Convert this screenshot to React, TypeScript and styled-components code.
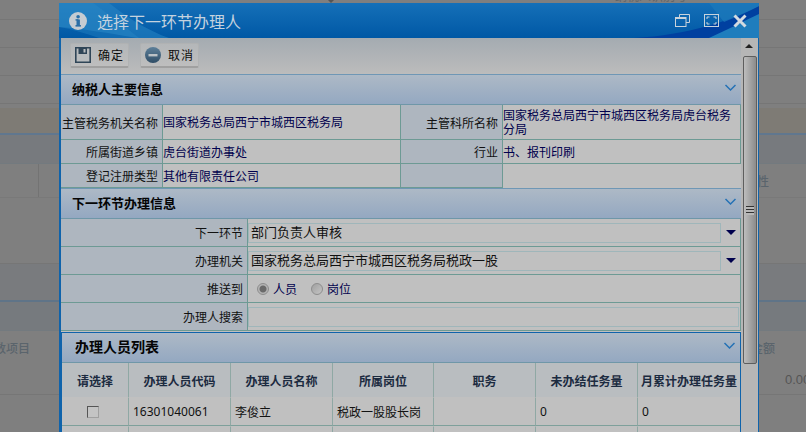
import React from 'react'
import styled, { createGlobalStyle } from 'styled-components'

const GlobalStyle = createGlobalStyle`
  html, body {
    margin: 0;
    padding: 0;
    background: #7f7f7f;
  }
  * {
    box-sizing: border-box;
  }
`

const Page = styled.div`
  position: relative;
  width: 806px;
  height: 432px;
  overflow: hidden;
  background: #7f7f7f;
  font-family: 'Noto Sans CJK SC', 'Liberation Sans', sans-serif;
  font-size: 12px;
`

const BackRow = styled.div<{ $h: number; $bg?: string; $line?: string }>`
  display: flex;
  justify-content: space-between;
  align-items: center;
  height: ${(p) => p.$h}px;
  background: ${(p) => p.$bg || 'transparent'};
  border-bottom: ${(p) => (p.$line ? `1px solid ${p.$line}` : 'none')};
  color: #5a646c;
  font-size: 12px;
  font-weight: 500;
  white-space: nowrap;
`

const TopStrip = styled.div`
  display: flex;
  height: 3px;
  overflow: hidden;
  color: #5f6468;
  font-size: 12px;
  line-height: 12px;
`

const StripArrow = styled.div`
  width: 0;
  height: 0;
  margin-left: 328px;
  border-top: 3px solid #555;
  border-left: 3px solid transparent;
  border-right: 3px solid transparent;
`

const StripText = styled.div`
  margin: -10px 0 0 281px;
  white-space: nowrap;
`

const BackLeft = styled.div`
  display: flex;
  justify-content: flex-end;
  width: 30px;
  overflow: hidden;
`

const BackRight = styled.div<{ $w: number; $gap?: number }>`
  display: flex;
  width: ${(p) => p.$w}px;
  margin-right: ${(p) => p.$gap || 0}px;
  overflow: hidden;
`

const BackCell = styled.div`
  width: 39px;
  height: 100%;
  border-right: 1px solid #737373;
`

const Amount = styled(BackRight)`
  font-size: 13px;
  font-weight: 400;
  font-family: 'Liberation Sans', sans-serif;
  color: #555;
`

const Modal = styled.div`
  position: absolute;
  left: 59px;
  top: 3px;
  width: 700px;
  height: 429px;
  display: flex;
  flex-direction: column;
`

const TitleBar = styled.div`
  position: relative;
  flex: none;
  display: flex;
  align-items: center;
  justify-content: space-between;
  height: 35px;
  padding: 0 12px 0 10px;
  overflow: hidden;
  background: linear-gradient(#1570b8, #0058a5);
`

const TitleArt = styled.svg`
  position: absolute;
  left: 0;
  top: 0;
`

const TitleLeft = styled.div`
  position: relative;
  display: flex;
  align-items: center;
  gap: 10px;
  color: #c4d2df;
  font-size: 16px;
`

const TitleIcons = styled.div`
  position: relative;
  display: flex;
  align-items: center;
  gap: 14px;
`

const Body = styled.div`
  flex: 1;
  min-height: 0;
  display: flex;
  border-left: 2px solid #0f63ab;
  border-right: 1px solid #0f63ab;
`

const Content = styled.div`
  width: 680px;
  overflow: hidden;
  background: #c0c0c0;
`

const Toolbar = styled.div`
  display: flex;
  gap: 11px;
  height: 36px;
  padding: 5px 9px;
  background: linear-gradient(#a4abb1, #bcbcbc);
`

const ToolButton = styled.div`
  display: flex;
  align-items: center;
  gap: 7px;
  width: 59px;
  height: 25px;
  padding: 0 0 1px 4px;
  border: 1px solid #b0b2b3;
  border-bottom: 2px solid #a0a0a0;
  border-radius: 2px;
  background: linear-gradient(#b4b7b9, #bebebe);
  color: #0c0c0c;
  letter-spacing: 1px;
`

const SectionHead = styled.div<{ $large?: boolean }>`
  display: flex;
  align-items: center;
  justify-content: space-between;
  height: ${(p) => (p.$large ? 30 : 31)}px;
  padding: 0 5px 3px ${(p) => (p.$large ? 13 : 11)}px;
  border-top: ${(p) => (p.$large ? 'none' : '1px solid #6f97b5')};
  border-bottom: 1px solid #6f97a8;
  background: linear-gradient(#adb9c6, #94a8c1);
  color: #050505;
  font-size: ${(p) => (p.$large ? 14 : 13)}px;
  font-weight: 700;
`

const Sheet = styled.table`
  width: 680px;
  border-spacing: 0;
  border-collapse: separate;
  table-layout: fixed;
`

const Label = styled.td<{ $h: number }>`
  height: ${(p) => p.$h}px;
  padding: 0 4px 0 0;
  border-right: 1px solid #6d9a94;
  border-bottom: 1px solid #6d9a94;
  background: #aeb6bf;
  color: #111;
  text-align: right;
  white-space: nowrap;
`

const Value = styled.td<{ $bare?: boolean }>`
  padding: 0;
  border-right: ${(p) => (p.$bare ? 'none' : '1px solid #6d9a94')};
  border-bottom: ${(p) => (p.$bare ? 'none' : '1px solid #6d9a94')};
  color: #00004d;
  line-height: 14px;
`

const Field = styled.td`
  padding: 0;
  border-right: 1px solid #6d9a94;
  border-bottom: 1px solid #6d9a94;
`

const SelectRow = styled.div`
  display: flex;
  align-items: center;
`

const InputBox = styled.div<{ $w: number }>`
  width: ${(p) => p.$w}px;
  height: 20px;
  padding-left: 2px;
  border: 1px solid #9fb6ba;
  color: #111;
  font-size: 13px;
  line-height: 16px;
`

const Caret = styled.div`
  width: 0;
  height: 0;
  margin-left: 5px;
  border-top: 5px solid #00004d;
  border-left: 5px solid transparent;
  border-right: 5px solid transparent;
`

const RadioRow = styled.div`
  display: flex;
  align-items: center;
  padding-left: 9px;
  color: #00004d;
`

const Radio = styled.span<{ $on?: boolean }>`
  width: 12px;
  height: 12px;
  margin-right: 4px;
  border: 1px solid #8d8d8d;
  border-radius: 50%;
  background: ${(p) =>
    p.$on
      ? 'radial-gradient(circle, #6a6a6a 0 3px, #b4b4b4 4px)'
      : 'linear-gradient(135deg, #a0a0a0, #c4c4c4)'};
`

const RadioText = styled.span`
  width: 38px;
`

const ListPanel = styled.div`
  margin-top: 1px;
  height: 110px;
  border: 1px solid #0f63ab;
  border-bottom: none;
`

const ListSheet = styled(Sheet)`
  width: 678px;
`

const HeadCell = styled.th`
  height: 34px;
  padding: 0;
  border-right: 1px solid #8fa8a4;
  background: #b9bdc0;
  color: #1c2b40;
  font-size: 12px;
  font-weight: 700;
  white-space: nowrap;

  &:last-child {
    border-right: none;
  }
`

const DataCell = styled.td<{ $center?: boolean }>`
  height: 29px;
  padding: 0 ${(p) => (p.$center ? 5 : 0)}px 0 ${(p) => (p.$center ? 0 : 4)}px;
  border-top: 1px solid transparent;
  border-right: 1px solid #8fa8a4;
  border-bottom: 1px solid #7ea09b;
  color: #111;
  font-family: 'Noto Sans', 'Noto Sans CJK SC', sans-serif;
  text-align: ${(p) => (p.$center ? 'center' : 'left')};

  &:last-child {
    border-right: none;
  }
`

const CheckBox = styled.div`
  display: inline-block;
  width: 12px;
  height: 12px;
  margin-top: 4px;
  border: 1px solid #555;
  border-right-color: #a0a0a0;
  border-bottom-color: #a0a0a0;
  background: #c4c4c4;
`

const Track = styled.div`
  width: 17px;
  display: flex;
  flex-direction: column;
  padding-left: 2px;
  background: #b6b6b6;
`

const TrackArrow = styled.div`
  height: 18px;
  display: flex;
  justify-content: center;
  padding: 6px 3px 0 0;

  &::after {
    content: '';
    width: 0;
    height: 0;
    border-bottom: 4px solid #222;
    border-left: 4px solid transparent;
    border-right: 4px solid transparent;
  }
`

const Thumb = styled.div`
  display: flex;
  align-items: center;
  justify-content: center;
  width: 14px;
  height: 308px;
  border: 1px solid #5e5e5e;
  border-radius: 2px;
  background: linear-gradient(90deg, #bdbdbd, #8b8b8b);
`

const Grip = styled.div`
  width: 8px;
  height: 9px;
  background: repeating-linear-gradient(#333 0 1px, #b8b8b8 1px 3px);
`

const Chevron = () => (
  <svg width="12" height="8" viewBox="0 0 12 8">
    <polyline points="1.5,1 6.5,6 11.5,1" fill="none" stroke="#2471b5" strokeWidth="1.5" />
  </svg>
)

const InfoIcon = () => (
  <svg width="18" height="18" viewBox="0 0 18 18">
    <circle cx="9" cy="9" r="9" fill="#c5ccd2" />
    <rect x="7.5" y="7.5" width="3.4" height="6.5" fill="#2a6ea6" />
    <rect x="6.5" y="13" width="5.4" height="1.6" fill="#2a6ea6" />
    <rect x="6.5" y="7.2" width="3" height="1.4" fill="#2a6ea6" />
    <circle cx="9.1" cy="4.7" r="1.8" fill="#2a6ea6" />
  </svg>
)

const RestoreIcon = () => (
  <svg width="15" height="13" viewBox="0 0 15 13">
    <path d="M4.5 3.5V.5h10v8H11" fill="none" stroke="#c8d3dc" />
    <rect x="0.5" y="3.5" width="10.5" height="9" fill="none" stroke="#c8d3dc" />
    <rect x="0.5" y="3" width="10.5" height="2" fill="#c8d3dc" />
  </svg>
)

const MaxIcon = () => (
  <svg width="15" height="13" viewBox="0 0 15 13">
    <rect x="0.5" y="0.5" width="14" height="12" fill="none" stroke="#c8d3dc" />
    <path d="M3 5V3h2.5M9.5 3H12v2M12 8v2H9.5M5.5 10H3V8" fill="none" stroke="#c8d3dc" />
  </svg>
)

const CloseIcon = () => (
  <svg width="14" height="14" viewBox="0 0 14 14">
    <path d="M1.5 1.5l11 11M12.5 1.5l-11 11" stroke="#d3dbe1" strokeWidth="3" />
  </svg>
)

const FloppyIcon = () => (
  <svg width="16" height="16" viewBox="0 0 16 16">
    <path d="M.8.8h14.4v14.4H.8z" fill="#b9bcbe" stroke="#2f4557" strokeWidth="1.6" />
    <rect x="3.5" y="1" width="8.5" height="6" fill="#2f4557" />
    <rect x="8.5" y="2" width="2" height="3.5" fill="#b9bcbe" />
  </svg>
)

const MinusIcon = () => (
  <svg width="16" height="16" viewBox="0 0 16 16">
    <defs>
      <linearGradient id="minusFill" x1="0" y1="0" x2="0" y2="1">
        <stop offset="0" stopColor="#5d7f99" />
        <stop offset="1" stopColor="#2f4d66" />
      </linearGradient>
    </defs>
    <circle cx="8" cy="8" r="8" fill="url(#minusFill)" />
    <rect x="3.5" y="7" width="9" height="2.4" fill="#bcc2c6" />
  </svg>
)

const heads = ['请选择', '办理人员代码', '办理人员名称', '所属岗位', '职务', '未办结任务量', '月累计办理任务量']

export default function App() {
  return (
    <Page>
      <GlobalStyle />
      <TopStrip>
        <StripArrow />
        <StripText>纳税人识别号</StripText>
      </TopStrip>
      <BackRow $h={17} $line="#767676" />
      <BackRow $h={28} $line="#767676" />
      <BackRow $h={28} $line="#767676" />
      <BackRow $h={28} $line="#767676" />
      <BackRow $h={4} />
      <BackRow $h={25} $bg="#7e7b75" />
      <BackRow $h={2} $bg="#60778f" />
      <BackRow $h={29} $bg="#777a7e" $line="#737a7f" />
      <BackRow $h={34} $line="#797979">
        <BackCell />
        <BackRight $w={12} $gap={37}>
          性
        </BackRight>
      </BackRow>
      <BackRow $h={66} $line="#767676" />
      <BackRow $h={36} $bg="#797b7e" />
      <BackRow $h={2} $bg="#5f7488" />
      <BackRow $h={29} $bg="#767a7e" $line="#737a7f" />
      <BackRow $h={33}>
        <BackLeft>税费数项目</BackLeft>
        <BackRight $w={24} $gap={31}>
          金额
        </BackRight>
      </BackRow>
      <BackRow $h={31} $line="#767676">
        <span />
        <Amount $w={21}>0.00</Amount>
      </BackRow>

      <Modal>
        <TitleBar>
          <TitleArt width="700" height="35" viewBox="0 0 700 35">
            <path d="M0 0H50C70 16 90 28 110 35H78C50 30 25 26 0 24Z" fill="#2a86c4" opacity="0.55" />
            <path d="M0 0H34C50 12 62 20 80 35H40C26 30 12 26 0 24Z" fill="#2f8dc8" opacity="0.35" />
            <path d="M575 35C630 32 670 18 700 3V35Z" fill="#0040a0" />
            <path d="M650 35C668 27 685 18 700 11V35Z" fill="#1f7dbd" />
            <path d="M640 0H700V3C690 8 678 14 665 19L650 0Z" fill="#1c7abb" opacity="0.75" />
          </TitleArt>
          <TitleLeft>
            <InfoIcon />
            选择下一环节办理人
          </TitleLeft>
          <TitleIcons>
            <RestoreIcon />
            <MaxIcon />
            <CloseIcon />
          </TitleIcons>
        </TitleBar>
        <Body>
          <Content>
            <Toolbar>
              <ToolButton>
                <FloppyIcon />
                确定
              </ToolButton>
              <ToolButton>
                <MinusIcon />
                取消
              </ToolButton>
            </Toolbar>

            <SectionHead>
              纳税人主要信息
              <Chevron />
            </SectionHead>
            <Sheet>
              <colgroup>
                <col width="102" />
                <col width="238" />
                <col width="102" />
                <col width="238" />
              </colgroup>
              <tbody>
                <tr>
                  <Label $h={35}>主管税务机关名称</Label>
                  <Value>国家税务总局西宁市城西区税务局</Value>
                  <Label $h={35}>主管科所名称</Label>
                  <Value>国家税务总局西宁市城西区税务局虎台税务分局</Value>
                </tr>
                <tr>
                  <Label $h={24}>所属街道乡镇</Label>
                  <Value>虎台街道办事处</Value>
                  <Label $h={24}>行业</Label>
                  <Value>书、报刊印刷</Value>
                </tr>
                <tr>
                  <Label $h={24}>登记注册类型</Label>
                  <Value>其他有限责任公司</Value>
                  <Label $h={24} />
                  <Value $bare />
                </tr>
              </tbody>
            </Sheet>

            <SectionHead>
              下一环节办理信息
              <Chevron />
            </SectionHead>
            <Sheet>
              <colgroup>
                <col width="187" />
                <col width="493" />
              </colgroup>
              <tbody>
                <tr>
                  <Label $h={28}>下一环节</Label>
                  <Field>
                    <SelectRow>
                      <InputBox $w={473}>部门负责人审核</InputBox>
                      <Caret />
                    </SelectRow>
                  </Field>
                </tr>
                <tr>
                  <Label $h={28}>办理机关</Label>
                  <Field>
                    <SelectRow>
                      <InputBox $w={473}>国家税务总局西宁市城西区税务局税政一股</InputBox>
                      <Caret />
                    </SelectRow>
                  </Field>
                </tr>
                <tr>
                  <Label $h={28}>推送到</Label>
                  <Field>
                    <RadioRow>
                      <Radio $on />
                      <RadioText>人员</RadioText>
                      <Radio />
                      <RadioText>岗位</RadioText>
                    </RadioRow>
                  </Field>
                </tr>
                <tr>
                  <Label $h={28}>办理人搜索</Label>
                  <Field>
                    <InputBox $w={491} />
                  </Field>
                </tr>
              </tbody>
            </Sheet>

            <ListPanel>
              <SectionHead $large>
                办理人员列表
                <Chevron />
              </SectionHead>
              <ListSheet>
                <colgroup>
                  <col width="67" />
                  <col width="102" />
                  <col width="102" />
                  <col width="101" />
                  <col width="102" />
                  <col width="102" />
                  <col width="102" />
                </colgroup>
                <thead>
                  <tr>
                    {heads.map((h) => (
                      <HeadCell key={h}>{h}</HeadCell>
                    ))}
                  </tr>
                </thead>
                <tbody>
                  <tr>
                    <DataCell $center>
                      <CheckBox />
                    </DataCell>
                    <DataCell>16301040061</DataCell>
                    <DataCell>李俊立</DataCell>
                    <DataCell>税政一股股长岗</DataCell>
                    <DataCell />
                    <DataCell>0</DataCell>
                    <DataCell>0</DataCell>
                  </tr>
                  <tr>
                    <DataCell />
                    <DataCell />
                    <DataCell />
                    <DataCell />
                    <DataCell />
                    <DataCell />
                    <DataCell />
                  </tr>
                </tbody>
              </ListSheet>
            </ListPanel>
          </Content>
          <Track>
            <TrackArrow />
            <Thumb>
              <Grip />
            </Thumb>
          </Track>
        </Body>
      </Modal>
    </Page>
  )
}
